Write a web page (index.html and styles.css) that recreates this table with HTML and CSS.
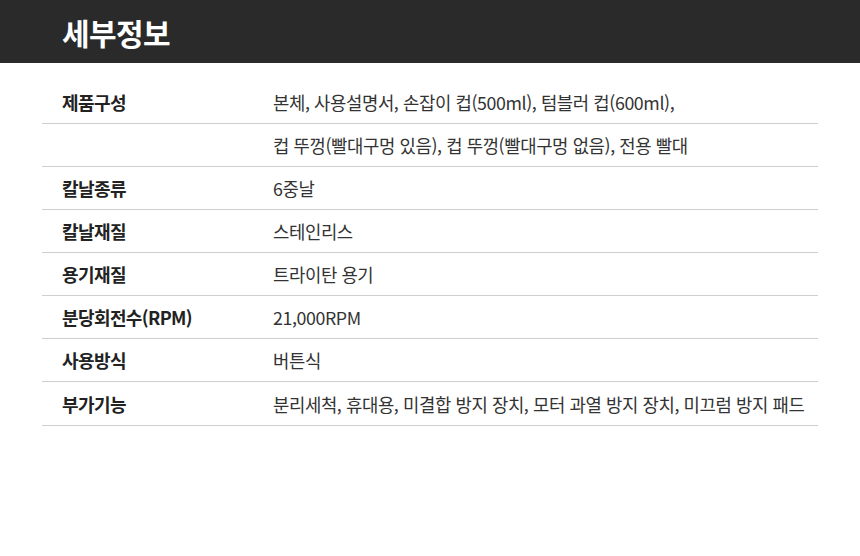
FILE: index.html
```html
<!DOCTYPE html>
<html lang="ko">
<head>
<meta charset="utf-8">
<link rel="stylesheet" href="styles.css">
</head>
<body>
<header class="bar"><h1 class="title">세부정보</h1></header>
<div class="specs">
  <div class="row"><div class="label">제품구성</div><div class="value">본체, 사용설명서, 손잡이 컵(500ml), 텀블러 컵(600ml),</div></div>
  <div class="row"><div class="label"></div><div class="value">컵 뚜껑(빨대구멍 있음), 컵 뚜껑(빨대구멍 없음), 전용 빨대</div></div>
  <div class="row"><div class="label">칼날종류</div><div class="value">6중날</div></div>
  <div class="row"><div class="label">칼날재질</div><div class="value">스테인리스</div></div>
  <div class="row"><div class="label">용기재질</div><div class="value">트라이탄 용기</div></div>
  <div class="row"><div class="label">분당회전수(RPM)</div><div class="value">21,000RPM</div></div>
  <div class="row"><div class="label">사용방식</div><div class="value">버튼식</div></div>
  <div class="row"><div class="label">부가기능</div><div class="value">분리세척, 휴대용, 미결합 방지 장치, 모터 과열 방지 장치, 미끄럼 방지 패드</div></div>
</div>
</body>
</html>
```
FILE: styles.css
```css
html, body { margin: 0; padding: 0; background: #fff; }
body { font-family: "Noto Sans CJK KR", "Noto Sans", sans-serif; color: #333; }
.bar { background: #2a2a2a; height: 63px; display: flex; align-items: center; padding-left: 62px; box-sizing: border-box; }
.title { margin: 0; color: #fff; font-size: 30px; font-weight: 700; letter-spacing: -0.6px; line-height: 1; }
.specs { margin: 17.5px 42px 0; }
.row { display: flex; height: 43.15px; align-items: center; border-bottom: 1px solid #cfcfcf; box-sizing: border-box; }
.label { width: 211px; padding-left: 20px; font-size: 18px; font-weight: 700; color: #222; letter-spacing: -0.6px; }
.value { font-size: 17.8px; color: #333; letter-spacing: -0.4px; }
```
